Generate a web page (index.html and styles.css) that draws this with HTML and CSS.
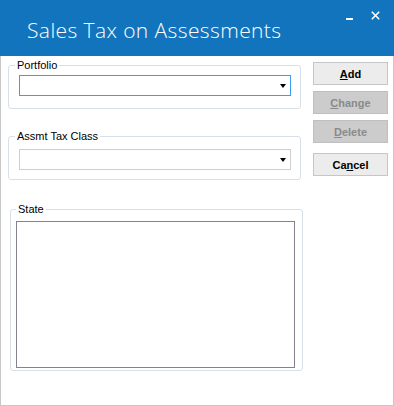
FILE: index.html
```html
<!DOCTYPE html>
<html>
<head>
<meta charset="utf-8">
<link rel="stylesheet" href="styles.css">
</head>
<body>
<div class="window">
  <div class="titlebar">
    <div class="title">Sales Tax on Assessments</div>
    <div class="controls">
      <svg class="min" width="7" height="2" viewBox="0 0 7 2"><rect x="0" y="0" width="7" height="2" fill="#fff"/></svg>
      <svg class="close" width="9" height="9" viewBox="0 0 9 9"><path d="M0.8 0.8 L8.2 8.2 M8.2 0.8 L0.8 8.2" stroke="#fff" stroke-width="1.6" fill="none"/></svg>
    </div>
  </div>
  <div class="client">
    <div class="left">
      <fieldset class="group g-portfolio">
        <legend>Portfolio</legend>
        <div class="combo focused"><span class="arrow"></span></div>
      </fieldset>
      <fieldset class="group g-class">
        <legend>Assmt Tax Class</legend>
        <div class="combo"><span class="arrow"></span></div>
      </fieldset>
      <fieldset class="group g-state">
        <legend>State</legend>
        <div class="listbox"></div>
      </fieldset>
    </div>
    <div class="buttons">
      <div class="btn"><u>A</u>dd</div>
      <div class="btn disabled"><u>C</u>hange</div>
      <div class="btn disabled"><u>D</u>elete</div>
      <div class="btn cancel">Ca<u>n</u>cel</div>
    </div>
  </div>
</div>
</body>
</html>
```
FILE: styles.css
```css
html, body {
  margin: 0;
  padding: 0;
  background: #ffffff;
}
.window {
  width: 394px;
  height: 406px;
  display: flex;
  flex-direction: column;
  font-family: "Liberation Sans", Arial, sans-serif;
  font-size: 11px;
  color: #000;
}
.titlebar {
  height: 56px;
  flex: none;
  background: #1274bd;
  display: flex;
  align-items: flex-start;
  box-sizing: border-box;
}
.title {
  font-family: "Open Sans", sans-serif;
  font-weight: 300;
  font-size: 21px;
  letter-spacing: 0.4px;
  line-height: 29px;
  color: #ffffff;
  padding-top: 16px;
  padding-left: 27px;
  white-space: nowrap;
}
.controls {
  margin-left: auto;
  display: flex;
  align-items: flex-start;
  padding-top: 11px;
  padding-right: 14px;
}
.controls .min {
  margin-top: 7px;
  display: block;
}
.controls .close {
  margin-left: 18px;
  display: block;
}
.client {
  flex: 1;
  box-sizing: border-box;
  border: 1px solid #c8c8c8;
  border-top: none;
  display: flex;
  padding-left: 7px;
  padding-top: 2px;
}
.left {
  width: 295px;
  display: flex;
  flex-direction: column;
}
.group {
  margin: 0;
  width: 293px;
  box-sizing: border-box;
  border: 1px solid #d7e0e8;
  border-radius: 3px;
  min-width: 0;
}
.group legend {
  padding: 0 2px;
  margin-left: -4px;
  line-height: 14px;
  font-size: 11px;
  color: #000;
}
.g-portfolio {
  padding: 3px 9px 12px 10px;
}
.g-class {
  margin-top: 20px;
  padding: 6px 9px 9px 10px;
}
.g-state {
  margin-top: 22px;
  margin-left: 2px;
  padding: 5px 7px 2px 5px;
}
.g-state legend {
  margin-left: 0;
}
.combo {
  height: 21px;
  box-sizing: border-box;
  border: 1px solid #cfcfcf;
  background: #fff;
  display: flex;
  align-items: center;
  justify-content: flex-end;
  padding-right: 4px;
}
.combo.focused {
  border-color: #3d9bf2;
}
.arrow {
  width: 0;
  height: 0;
  border-left: 3.5px solid transparent;
  border-right: 3.5px solid transparent;
  border-top: 4px solid #000;
  margin-top: 1px;
}
.listbox {
  height: 147px;
  box-sizing: border-box;
  border: 1px solid #82838f;
  background: #fff;
}
.buttons {
  margin-left: 10px;
  padding-top: 4px;
  display: flex;
  flex-direction: column;
}
.btn {
  width: 75px;
  height: 23px;
  box-sizing: border-box;
  border: 1px solid #c6c6c6;
  background: #ececec;
  font-weight: bold;
  font-size: 11px;
  display: flex;
  align-items: center;
  justify-content: center;
  margin-bottom: 6px;
  color: #000;
}
.btn.disabled {
  background: #cccccc;
  border-color: #bfbfbf;
  color: #8a8a8a;
}
.btn.cancel {
  margin-top: 4px;
}
```
